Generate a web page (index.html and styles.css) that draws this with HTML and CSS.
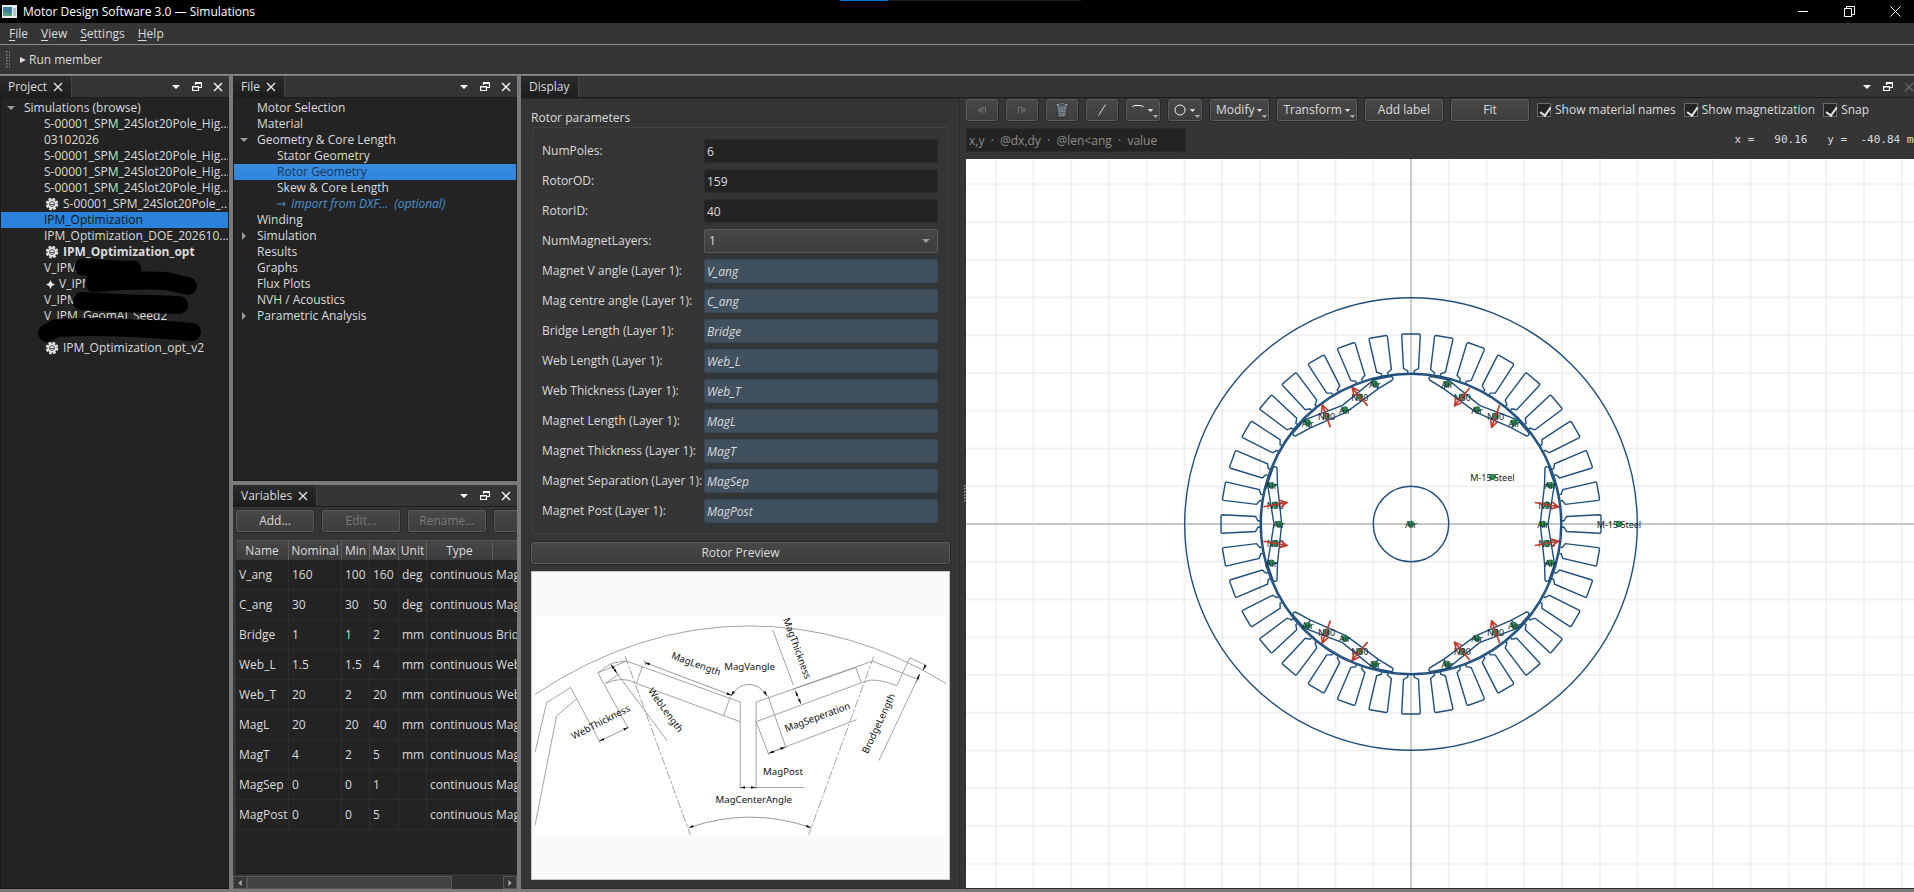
FILE: index.html
```
<!DOCTYPE html>
<html lang="en">
<head>
<meta charset="utf-8">
<title>Motor Design Software 3.0 — Simulations</title>
<link rel="stylesheet" href="styles.css">
</head>
<body>
<svg class="defs" aria-hidden="true">
  <defs>
    <symbol id="i-drop" viewBox="0 0 10 10"><path d="M1 3h8L5 7z" fill="currentColor"/></symbol>
    <symbol id="i-open" viewBox="0 0 10 10"><path d="M1 3h8L5 7z" fill="#9a9a9a"/></symbol>
    <symbol id="i-shut" viewBox="0 0 10 10"><path d="M3 1v8l4-4z" fill="#9a9a9a"/></symbol>
    <symbol id="i-float" viewBox="0 0 10 10"><path d="M3.500 3V.5h6v5H7M.5 4.500h6v4h-6zM3 1.500h7M0 5h7" fill="none" stroke="currentColor" stroke-width="1.200"/></symbol>
    <symbol id="i-close" viewBox="0 0 10 10"><path d="M1 1l8 8M9 1L1 9" fill="none" stroke="currentColor" stroke-width="1.300"/></symbol>
    <symbol id="i-gear" viewBox="0 0 14 14">
      <circle cx="7" cy="7" r="5.300" fill="none" stroke="#e6e6e6" stroke-width="2" stroke-dasharray="2.660 1.500"/>
      <circle cx="7" cy="7" r="4.700" fill="#e6e6e6"/><circle cx="7" cy="7" r="2.500" fill="none" stroke="#555" stroke-width="1"/>
      <path d="M5 7.500h4" stroke="#555" stroke-width="1"/>
    </symbol>
  </defs>
</svg>
<div class="app">
  <header class="titlebar">
    <svg class="app-icon" viewBox="0 0 15 13"><rect width="15" height="13" fill="#e9eef0"/><path d="M1 2h9v9H1z" fill="#3f7f9c"/><path d="M1 7l9 2v2H1z" fill="#58a57a"/><path d="M11 3h3v8h-3z" fill="#b9c4c9"/></svg>
    <h1 class="title">Motor Design Software 3.0 — Simulations</h1>
    <div class="progress"><i class="progress-fill"></i></div>
    <div class="win-buttons">
      <button class="win" aria-label="Minimize"><svg viewBox="0 0 11 11"><path d="M0 5.500h10" stroke="#fff" fill="none"/></svg></button>
      <button class="win" aria-label="Restore"><svg viewBox="0 0 11 11"><path d="M.5 2.500h7v8h-7zM2.500 2.500v-2h8v8h-3" stroke="#fff" fill="none"/></svg></button>
      <button class="win" aria-label="Close"><svg viewBox="0 0 11 11"><path d="M.5.5l10 10M10.500.5l-10 10" stroke="#fff" fill="none"/></svg></button>
    </div>
  </header>
  <nav class="menubar">
    <button class="menu"><u>F</u>ile</button><button class="menu"><u>V</u>iew</button><button class="menu"><u>S</u>ettings</button><button class="menu"><u>H</u>elp</button>
  </nav>
  <div class="toolbar"><i class="grip"></i>
    <button class="run"><svg class="run-icon" viewBox="0 0 6 6"><path d="M0 0l6 3-6 3z" fill="#ddd"/></svg>Run member</button>
  </div>
  <main class="docks">
    <section class="dock project">
      <div class="dock-head"><button class="tab">Project<svg class="tab-x"><use href="#i-close"/></svg></button>
        <span class="dock-tools"><button aria-label="Menu"><svg><use href="#i-drop"/></svg></button><button aria-label="Float"><svg><use href="#i-float"/></svg></button><button aria-label="Close"><svg><use href="#i-close"/></svg></button></span></div>
      <ul class="tree">
        <li class="node root"><svg class="twist"><use href="#i-open"/></svg>Simulations (browse)</li>
        <li class="node leaf">S-00001_SPM_24Slot20Pole_Hig...</li>
        <li class="node leaf">03102026</li>
        <li class="node leaf">S-00001_SPM_24Slot20Pole_Hig...</li>
        <li class="node leaf">S-00001_SPM_24Slot20Pole_Hig...</li>
        <li class="node leaf">S-00001_SPM_24Slot20Pole_Hig...</li>
        <li class="node leaf"><svg class="gear"><use href="#i-gear"/></svg>S-00001_SPM_24Slot20Pole_...</li>
        <li class="node leaf selected">IPM_Optimization</li>
        <li class="node leaf">IPM_Optimization_DOE_202610...</li>
        <li class="node leaf strong"><svg class="gear"><use href="#i-gear"/></svg>IPM_Optimization_opt</li>
        <li class="node leaf">V_IPM</li>
        <li class="node leaf"><svg class="spark" viewBox="0 0 10 10"><path d="M5 0l1.600 3.400L10 5 6.600 6.600 5 10 3.400 6.600 0 5l3.400-1.600z" fill="#e6e6e6"/></svg>V_IPM</li>
        <li class="node leaf">V_IPM</li>
        <li class="node leaf">V_IPM_GeomAI_Seed2</li>
        <li class="node leaf"></li>
        <li class="node leaf"><svg class="gear"><use href="#i-gear"/></svg>IPM_Optimization_opt_v2</li>
        <li class="redact" aria-hidden="true"><svg viewBox="0 0 210 100"><g fill="none" stroke="#000" stroke-linecap="round" stroke-linejoin="round"><path d="M82 17C100 17 116 20 132 19" stroke-width="17"/><path d="M93 33C120 31 150 30 165 31L187 36" stroke-width="18"/><path d="M81 51C110 53 140 54 178 55" stroke-width="18"/><path d="M46 83L56 78C90 76 130 77 191 82" stroke-width="18"/></g></svg></li>
      </ul>
    </section>
    <div class="middle">
      <section class="dock file">
        <div class="dock-head"><button class="tab">File<svg class="tab-x"><use href="#i-close"/></svg></button>
          <span class="dock-tools"><button aria-label="Menu"><svg><use href="#i-drop"/></svg></button><button aria-label="Float"><svg><use href="#i-float"/></svg></button><button aria-label="Close"><svg><use href="#i-close"/></svg></button></span></div>
        <ul class="tree">
          <li class="node root">Motor Selection</li>
          <li class="node root">Material</li>
          <li class="node root"><svg class="twist"><use href="#i-open"/></svg>Geometry &amp; Core Length</li>
          <li class="node leaf">Stator Geometry</li>
          <li class="node leaf selected soft">Rotor Geometry</li>
          <li class="node leaf">Skew &amp; Core Length</li>
          <li class="node leaf link"><svg class="arrow" viewBox="0 0 10 8"><path d="M0 4h8M6 2l2.500 2L6 6" fill="none" stroke="#4d94d6"/></svg>Import from DXF...&nbsp; (optional)</li>
          <li class="node root">Winding</li>
          <li class="node root"><svg class="twist"><use href="#i-shut"/></svg>Simulation</li>
          <li class="node root">Results</li>
          <li class="node root">Graphs</li>
          <li class="node root">Flux Plots</li>
          <li class="node root">NVH / Acoustics</li>
          <li class="node root"><svg class="twist"><use href="#i-shut"/></svg>Parametric Analysis</li>
        </ul>
      </section>
      <section class="dock variables">
        <div class="dock-head"><button class="tab">Variables<svg class="tab-x"><use href="#i-close"/></svg></button>
          <span class="dock-tools"><button aria-label="Menu"><svg><use href="#i-drop"/></svg></button><button aria-label="Float"><svg><use href="#i-float"/></svg></button><button aria-label="Close"><svg><use href="#i-close"/></svg></button></span></div>
        <div class="var-actions"><button class="btn wide">Add...</button><button class="btn wide" disabled>Edit...</button><button class="btn wide" disabled>Rename...</button><button class="btn wide" disabled aria-label="Delete"></button></div>
        <div class="table-wrap">
          <table class="vars">
            <colgroup><col class="c-name"><col class="c-nom"><col class="c-min"><col class="c-max"><col class="c-unit"><col class="c-type"><col class="c-desc"></colgroup>
            <thead><tr><th>Name</th><th>Nominal</th><th>Min</th><th>Max</th><th>Unit</th><th>Type</th><th></th></tr></thead>
            <tbody>
              <tr><td>V_ang</td><td>160</td><td>100</td><td>160</td><td>deg</td><td>continuous</td><td>Mag</td></tr>
              <tr><td>C_ang</td><td>30</td><td>30</td><td>50</td><td>deg</td><td>continuous</td><td>Mag</td></tr>
              <tr><td>Bridge</td><td>1</td><td>1</td><td>2</td><td>mm</td><td>continuous</td><td>Brid</td></tr>
              <tr><td>Web_L</td><td>1.5</td><td>1.5</td><td>4</td><td>mm</td><td>continuous</td><td>Web</td></tr>
              <tr><td>Web_T</td><td>20</td><td>2</td><td>20</td><td>mm</td><td>continuous</td><td>Web</td></tr>
              <tr><td>MagL</td><td>20</td><td>20</td><td>40</td><td>mm</td><td>continuous</td><td>Mag</td></tr>
              <tr><td>MagT</td><td>4</td><td>2</td><td>5</td><td>mm</td><td>continuous</td><td>Mag</td></tr>
              <tr><td>MagSep</td><td>0</td><td>0</td><td>1</td><td></td><td>continuous</td><td>Mag</td></tr>
              <tr><td>MagPost</td><td>0</td><td>0</td><td>5</td><td></td><td>continuous</td><td>Mag</td></tr>
            </tbody>
          </table>
        </div>
        <div class="hscroll"><button class="sb" aria-label="Scroll left"><svg viewBox="0 0 10 10"><path d="M7 1v8L3 5z" fill="#aaa"/></svg></button><div class="track"><div class="thumb"></div></div><button class="sb" aria-label="Scroll right"><svg viewBox="0 0 10 10"><path d="M3 1v8l4-4z" fill="#aaa"/></svg></button></div>
      </section>
    </div>
    <section class="dock display">
      <div class="dock-head"><button class="tab">Display</button>
        <span class="dock-tools edge"><button aria-label="Menu"><svg><use href="#i-drop"/></svg></button><button aria-label="Float"><svg><use href="#i-float"/></svg></button><button aria-label="Close" disabled><svg><use href="#i-close"/></svg></button></span></div>
      <div class="display-body">
        <div class="params">
          <h2 class="group-title">Rotor parameters</h2>
          <form class="group">
            <label for="p1">NumPoles:</label><input class="field" id="p1" value="6">
            <label for="p2">RotorOD:</label><input class="field" id="p2" value="159">
            <label for="p3">RotorID:</label><input class="field" id="p3" value="40">
            <label for="p4">NumMagnetLayers:</label><span class="combo"><select class="select" id="p4"><option>1</option></select><svg class="combo-arrow"><use href="#i-open"/></svg></span>
            <label for="p5">Magnet V angle (Layer 1):</label><input class="field bound" id="p5" value="V_ang">
            <label for="p6">Mag centre angle (Layer 1):</label><input class="field bound" id="p6" value="C_ang">
            <label for="p7">Bridge Length (Layer 1):</label><input class="field bound" id="p7" value="Bridge">
            <label for="p8">Web Length (Layer 1):</label><input class="field bound" id="p8" value="Web_L">
            <label for="p9">Web Thickness (Layer 1):</label><input class="field bound" id="p9" value="Web_T">
            <label for="p10">Magnet Length (Layer 1):</label><input class="field bound" id="p10" value="MagL">
            <label for="p11">Magnet Thickness (Layer 1):</label><input class="field bound" id="p11" value="MagT">
            <label for="p12">Magnet Separation (Layer 1):</label><input class="field bound" id="p12" value="MagSep">
            <label for="p13">Magnet Post (Layer 1):</label><input class="field bound" id="p13" value="MagPost">
          </form>
          <button class="btn preview-btn">Rotor Preview</button>
          <div class="preview">
            <svg class="sketch" viewBox="45 228 1236 657">
              <defs><marker id="ar" viewBox="0 0 16 8" refX="16" refY="4" markerWidth="16" markerHeight="8" markerUnits="userSpaceOnUse" orient="auto-start-reverse"><path d="M0 0l16 4-16 4z" fill="#111"/></marker></defs>
              <rect x="45" y="228" width="1236" height="657" fill="#fff"/>
              <g fill="none" stroke="#8c8c8c" stroke-width="2.400">
                <path d="M45 463Q355 257 688 257Q1000 257 1281 430"/>
                <path d="M45 638L80 488 152 442 242 610M45 857L110 527 170 477"/>
                <path d="M234 398L274 370 318 362 662 486V748M234 398L326 566M234 398L318 364M257 430L300 400M257 430Q310 406 350 430L662 545M368 379L350 430M632 470L613 526"/>
                <path d="M710 748V486L1060 363 1202 420M710 545L1035 425Q1065 410 1133 437L1172 353 1224 377M710 545L748 645M1010 382L1026 428M745 466L800 624M820 448L1010 382"/>
                <path d="M760 269L822 435M290 398L443 603M1202 402L1079 662M1012 539L748 640M710 743H855M374 360L378 376"/>
                <path d="M316 348L512 885M1064 348L868 885" stroke-dasharray="26 6 8 6"/>
              </g>
              <g fill="none" stroke="#666" stroke-width="2" marker-start="url(#ar)" marker-end="url(#ar)">
                <path d="M375 367L637 466"/><path d="M635 468Q655 433 688 433T743 468"/><path d="M828 452L845 492"/><path d="M748 640L798 621"/><path d="M662 743H710"/><path d="M238 604L326 562"/><path d="M273 372L292 400"/><path d="M507 864Q600 832 692 832T876 864"/>
              </g>
              <g fill="none" stroke="#666" stroke-width="2" marker-end="url(#ar)"><path d="M1190 428L1202 402"/><path d="M1220 374L1212 390"/></g>
              <g class="sketch-text">
                <text x="614" y="391">MagVangle</text><text x="731" y="704">MagPost</text><text x="588" y="790">MagCenterAngle</text>
                <text transform="translate(453 354) rotate(20)">MagLength</text>
                <text transform="translate(791 237) rotate(70)">MagThickness</text>
                <text transform="translate(384 453) rotate(54)">WebLength</text>
                <text transform="translate(161 599) rotate(-27)">WebThickness</text>
                <text transform="translate(800 576) rotate(-20)">MagSeperation</text>
                <text transform="translate(1046 643) rotate(-65)">BrodgeLength</text>
              </g>
            </svg>
          </div>
        </div>
        <i class="split-grip"></i>
        <div class="cad">
          <div class="cad-tools">
            <button class="btn icon" disabled aria-label="Undo"><svg viewBox="0 0 10 10"><path d="M3.500 3L1.500 5l2 2M1.500 5h3.500M5 8.500V2.500h3.500V8" fill="none" stroke="#777"/></svg></button>
            <button class="btn icon" disabled aria-label="Redo"><svg viewBox="0 0 10 10"><path d="M6.500 3l2 2-2 2M8.500 5H5M5 8.500V2.500H1.500V8" fill="none" stroke="#777"/></svg></button>
            <button class="btn icon" aria-label="Delete"><svg class="bin" viewBox="0 0 14 16"><path d="M1.500 3.500h11L10.500 15h-7z" fill="#86949a" stroke="#111" stroke-width=".6"/><path d="M3 5l2 9M5.500 5l1 9M8.500 5l-1 9M11 5L9 14M3 7.500h8M3.500 10.500h7" stroke="#4c5a60" stroke-width=".7" fill="none"/><ellipse cx="7" cy="3" rx="6.300" ry="1.900" fill="#a9b5ba" stroke="#111" stroke-width=".6"/><ellipse cx="7" cy="3" rx="4" ry=".9" fill="#3f4a4f"/></svg></button>
            <button class="btn icon" aria-label="Line"><svg viewBox="0 0 10 12"><path d="M1.500 11.500L8.500.5" stroke="#ddd" fill="none"/></svg></button>
            <button class="btn split" aria-label="Arc"><svg class="shape" viewBox="0 0 12 12"><path d="M.5 2.500L3 1.500h5l3.500 1" stroke="#eee" fill="none"/></svg><svg class="caret"><use href="#i-drop"/></svg><svg class="corner"><use href="#i-drop"/></svg></button>
            <button class="btn split" aria-label="Circle"><svg class="shape" viewBox="0 0 12 12"><circle cx="6" cy="6" r="5" stroke="#eee" fill="none"/></svg><svg class="caret"><use href="#i-drop"/></svg><svg class="corner"><use href="#i-drop"/></svg></button>
            <button class="btn split">Modify<svg class="caret"><use href="#i-drop"/></svg><svg class="corner"><use href="#i-drop"/></svg></button>
            <button class="btn split">Transform<svg class="caret"><use href="#i-drop"/></svg><svg class="corner"><use href="#i-drop"/></svg></button>
            <button class="btn wide">Add label</button>
            <button class="btn wide">Fit</button>
            <label class="check"><input type="checkbox" checked>Show material names</label>
            <label class="check"><input type="checkbox" checked>Show magnetization</label>
            <label class="check"><input type="checkbox" checked>Snap</label>
          </div>
          <div class="cad-entry">
            <input class="field coord" aria-label="Coordinate entry" placeholder="x,y  ·  @dx,dy  ·  @len&lt;ang  ·  value">
            <output class="readout">x =   90.16   y =  -40.84 mm</output>
          </div>
          <svg class="canvas" viewBox="-445 -365 948 729" preserveAspectRatio="xMinYMid slice">
            <defs>
              <pattern id="grid" width="37.750" height="37.750" patternUnits="userSpaceOnUse" x="-18.875" y="-18.875"><path d="M18.875 0V37.750M0 18.875H37.750" stroke="#e6e6e6" fill="none"/></pattern>
              <marker id="red" viewBox="0 0 9 9" refX="8" refY="4.500" markerWidth="9" markerHeight="9" markerUnits="userSpaceOnUse" orient="auto"><path d="M1 1l7 3.500L1 8" fill="none" stroke="#c0392b" stroke-width="1.600"/></marker>
              <path id="slot" d="M-3.200-151V-153L-7.500-155.500-9.300-188.500Q-9.300-190-8-190H8Q9.300-190 9.300-188.500L7.500-155.500 3.200-153V-151"/>
              <path id="pole" d="M134-56Q136-59 138-56L143.500-40 137 0 143.500 40 138 56Q136 59 134 56L133.500 39 129.300 0 133.500-39ZM133.500-39L143.500-40M133.500 39L143.500 40"/>
            </defs>
            <rect x="-500" y="-900" width="3000" height="1800" fill="#fff"/>
            <rect x="-500" y="-900" width="3000" height="1800" fill="url(#grid)"/>
            <path d="M-500 0H2500M0-900V900" stroke="#c6c6c6" stroke-width="1.800"/>
            <g id="machine" fill="none" stroke="#1f4e7c" stroke-width="1.400"><circle r="226.300"/><circle r="37.700"/><circle r="150.800"/><circle r="149.700"/></g>
            <g id="marks"></g>
          </svg>
        </div>
      </div>
    </section>
  </main>
</div>
<script src="machine.js"></script>
</body>
</html>
```
FILE: styles.css
```
* { box-sizing: border-box; }
html, body { height: 100%; margin: 0; }
body { background: #353535; color: #dcdcdc; font: 12px/16px "Open Sans", "Noto Sans", sans-serif; overflow: hidden; }
button, input, select { font: inherit; color: inherit; margin: 0; }
button { background: none; border: 0; padding: 0; white-space: nowrap; }
h1, h2 { font: inherit; margin: 0; }
svg { display: block; flex: none; }
.defs { position: absolute; width: 0; height: 0; }
.app { height: 100vh; display: flex; flex-direction: column; border-bottom: 3px solid #7a7a7a; overflow: hidden; }

.titlebar { position: relative; height: 23px; flex: none; background: #000; color: #fff; display: flex; align-items: center; padding-left: 2px; }
.app-icon { width: 15px; height: 13px; margin-right: 6px; }
.title { flex: 1; }
.progress { position: absolute; top: 0; left: 840px; width: 241px; height: 1px; background: #222; }
.progress-fill { display: block; width: 48px; height: 1px; background: #0078d7; }
.win-buttons { display: flex; margin-right: -4px; }
.win { width: 46px; height: 20px; display: grid; place-items: center; }
.win svg { width: 11px; height: 11px; }

.menubar { flex: none; height: 22px; display: flex; gap: 13px; padding-left: 9px; border-bottom: 1px solid #8a8a8a; }
.menu u { text-underline-offset: 2px; }
.toolbar { flex: none; height: 30px; display: flex; align-items: center; gap: 10px; padding-left: 5px; border-bottom: 1px solid #8a8a8a; }
.grip { width: 5px; height: 17px; background: repeating-conic-gradient(#707070 0 25%, transparent 0 100%) 0 0 / 3px 3px; }
.run { display: flex; align-items: center; gap: 3px; }
.run-icon { width: 6px; height: 6px; }

.docks { flex: 1; min-height: 0; padding-top: 1px; display: grid; grid-template-columns: 229px 284px minmax(0, 1fr); column-gap: 4px; background: #7a7a7a; }
.middle { display: grid; grid-template-rows: minmax(0, 405fr) minmax(0, 404fr); row-gap: 4px; min-height: 0; }
.dock { background: #353535; min-width: 0; min-height: 0; display: flex; flex-direction: column; overflow: hidden; }
.dock-head { flex: none; height: 22px; display: flex; justify-content: space-between; border-bottom: 1px solid #1c1c1c; }
.tab { background: linear-gradient(#2b2b2b, #1d1d1d); border-right: 1px solid #444; padding: 0 8px; display: flex; align-items: center; gap: 6px; }
.tab-x { width: 10px; height: 10px; color: #e6e6e6; }
.dock-tools { display: flex; align-items: center; gap: 11px; padding-right: 6px; color: #fff; flex: none; }
.dock-tools.edge { margin-right: -6px; }
.dock-tools svg { width: 10px; height: 10px; }
.dock-tools button:disabled { color: #6a6a6a; }

.tree { position: relative; flex: 1; margin: 0; padding: 2px 0 0; list-style: none; background: #232323; border: 0 solid #1a1a1a; border-width: 0 1px 1px; overflow: hidden; }
.node { height: 16px; display: flex; align-items: center; white-space: pre; position: relative; }
.root { padding-left: 23px; }
.leaf { padding-left: 43px; }
.twist { position: absolute; left: 5px; width: 10px; height: 10px; }
.selected { background: #2a82da; color: #101820; }
.soft { background: linear-gradient(#3a8de0, #2f86dc); color: #17385c; }
.strong { font-weight: 700; }
.link { color: #4d94d6; font-style: italic; }
.gear { width: 14px; height: 14px; margin: 0 4px 0 1px; }
.spark { width: 9px; height: 9px; margin: 0 4px 0 2px; }
.arrow { width: 10px; height: 8px; margin-right: 4px; }
.redact { position: absolute; left: 0; top: 152px; }
.redact svg { width: 210px; height: 100px; }

.btn { height: 22px; border: 1px solid #5a5a5a; border-radius: 2px; background: linear-gradient(#484848, #3d3d3d); box-shadow: 0 0 0 1px #2a2a2a; display: flex; align-items: center; justify-content: center; flex: none; }
.btn:disabled { color: #7b7b7b; }
.wide { width: 78px; }
.icon { width: 32px; }
.icon svg { width: 10px; height: 12px; }
.icon .bin { width: 14px; height: 16px; }
.split { position: relative; padding: 0 5px; gap: 2px; }
.shape { width: 12px; height: 12px; margin-right: 1px; }
.caret { width: 7px; height: 7px; }
.corner { position: absolute; right: 0; bottom: 0; width: 7px; height: 7px; color: #aaa; }

.var-actions { display: flex; gap: 8px; padding: 3px 0 8px 3px; flex: none; }
.table-wrap { flex: 1; min-height: 0; margin-left: 3px; background: #232323; overflow: hidden; border-bottom: 1px solid #1a1a1a; }
.vars { table-layout: fixed; width: 360px; border-collapse: separate; border-spacing: 0; }
.c-name, .c-nom { width: 53px; }
.c-min, .c-unit { width: 28px; }
.c-max { width: 29px; }
.c-type { width: 66px; }
.vars th { height: 20px; padding: 0; font-weight: 400; background: linear-gradient(#464646, #3c3c3c); border-right: 1px solid #5e5e5e; border-top: 1px solid #555; }
.vars td { height: 30px; padding: 0 0 0 3px; border-right: 1px solid #2e2e2e; border-bottom: 1px solid #2e2e2e; white-space: nowrap; }
.hscroll { flex: none; height: 15px; padding-top: 2px; display: flex; }
.sb { width: 14px; border: 1px solid #555; display: grid; place-items: center; }
.sb svg { width: 8px; height: 8px; }
.track { flex: 1; background: #303030; }
.thumb { width: 80%; height: 100%; background: #424242; border: 1px solid #585858; }

.display-body { flex: 1; min-height: 0; display: grid; grid-template-columns: minmax(300px, 439px) 6px minmax(0, 1fr); }
.params { min-height: 0; padding: 11px 9px 8px 10px; display: flex; flex-direction: column; border: 1px solid #2a2a2a; border-left: 0; }
.group-title { flex: none; }
.group { flex: none; margin: 1px 1px 8px; padding: 11px 10px 10px 9px; border: 1px solid #424242; border-radius: 2px; display: grid; grid-template-columns: 162px minmax(0, 1fr); row-gap: 6px; align-items: center; white-space: nowrap; }
.field { width: 100%; height: 24px; min-width: 0; padding: 0 2px; background: #232323; border: 1px solid #2b2b2b; border-radius: 2px; outline: 0; }
.bound { background: #40505f; border-color: #344657; font-style: italic; }
.combo { position: relative; display: block; }
.select { width: 100%; height: 24px; appearance: none; padding: 0 4px; border: 1px solid #5a5a5a; border-radius: 2px; background: linear-gradient(#484848, #3d3d3d); }
.combo-arrow { position: absolute; right: 7px; top: 7px; width: 10px; height: 10px; pointer-events: none; }
.preview-btn { width: 100%; margin-bottom: 7px; }
.preview { flex: 1; min-height: 0; background: #fafafa; border: 1px solid #c8c8c8; padding: 3px; display: flex; }
.sketch { width: 100%; height: 100%; }
.sketch-text { font: 29px "Noto Sans", sans-serif; fill: #111; }
.split-grip { align-self: center; justify-self: end; width: 3px; height: 17px; background: repeating-conic-gradient(#808080 0 25%, transparent 0 100%) 0 0 / 3px 3px; }
.cad { display: flex; flex-direction: column; min-width: 0; min-height: 0; overflow: hidden; border-bottom: 1px solid #2a2a2a; }
.cad-tools { flex: none; display: flex; align-items: center; gap: 8px; padding: 1px 0 7px; }
.check { display: flex; align-items: center; gap: 4px; white-space: nowrap; }
.check input { appearance: none; width: 14px; height: 14px; border: 1px solid #6a6a6a; background: #232323; position: relative; }
.check input:checked::after { content: ""; position: absolute; left: 4px; top: 1px; width: 5px; height: 9px; border: solid #e0e0e0; border-width: 0 2px 2px 0; transform: rotate(35deg); }
.cad-entry { flex: none; display: flex; justify-content: space-between; align-items: center; padding-bottom: 7px; }
.coord { width: 220px; }
.coord::placeholder { color: #8d8d8d; opacity: 1; white-space: pre; }
.readout { font: 11px/16px "DejaVu Sans Mono", monospace; white-space: pre; margin-right: -6px; }
.canvas { flex: 1; min-height: 0; width: 100%; }
.mark-text { font: 9px "Noto Sans", sans-serif; fill: #16202a; text-anchor: middle; }
```
FILE: machine.js
```
const NS = "http://www.w3.org/2000/svg";
const machine = document.getElementById("machine");
const marks = document.getElementById("marks");

function add(parent, tag, attrs, text) {
  const el = document.createElementNS(NS, tag);
  for (const key in attrs) el.setAttribute(key, attrs[key]);
  if (text) el.textContent = text;
  parent.appendChild(el);
}

function turn(x, y, deg) {
  const a = deg * Math.PI / 180;
  return [x * Math.cos(a) - y * Math.sin(a), x * Math.sin(a) + y * Math.cos(a)];
}

function mark(x, y, name) {
  add(marks, "circle", { cx: x, cy: y, r: 3.3, fill: "#2a8a50" });
  add(marks, "text", { x: x, y: y + 4, class: "mark-text" }, name);
}

for (let i = 0; i < 36; i++) add(machine, "use", { href: "#slot", transform: `rotate(${i * 10})` });

for (let p = 0; p < 6; p++) {
  const deg = p * 60;
  add(machine, "use", { href: "#pole", transform: `rotate(${deg})` });
  for (const [x, y] of [[139.5, -38.7], [132.2, 0], [139.5, 38.7]]) mark(...turn(x, y, deg), "Air");
  for (const s of [-1, 1]) {
    mark(...turn(135.8, 19.2 * s, deg), "N30");
    let from = turn(124, 21.5 * s, deg), to = turn(147.5, 17.2 * s, deg);
    if (p % 2) [from, to] = [to, from];
    add(marks, "path", { d: `M${from}L${to}`, stroke: "#c0392b", "stroke-width": 1.6, fill: "none", "marker-end": "url(#red)" });
  }
}
mark(0, 0, "Air");
mark(81.4, -47, "M-15 Steel");
mark(208, 0, "M-15 Steel");
```
